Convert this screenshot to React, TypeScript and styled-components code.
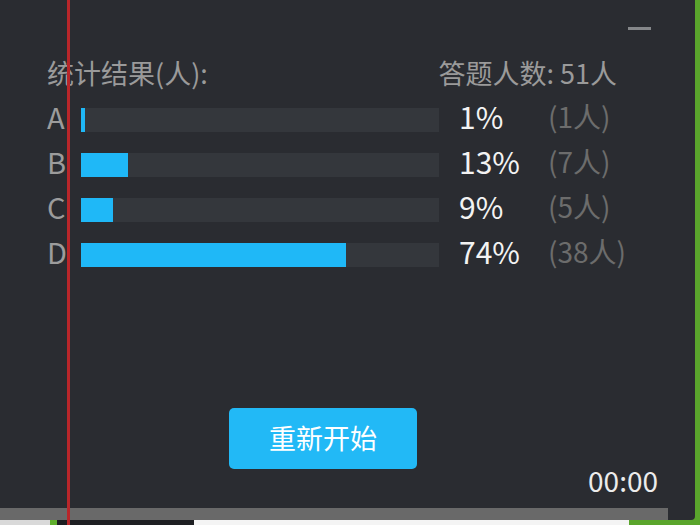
import styled, { createGlobalStyle } from 'styled-components';

interface ResultRow {
  label: string;
  percent: number;
  count: number;
}

const rows: ResultRow[] = [
  { label: 'A', percent: 1, count: 1 },
  { label: 'B', percent: 13, count: 7 },
  { label: 'C', percent: 9, count: 5 },
  { label: 'D', percent: 74, count: 38 },
];

const GlobalStyle = createGlobalStyle`
  html, body {
    margin: 0;
    padding: 0;
    width: 700px;
    height: 525px;
    overflow: hidden;
    background: #2a2c31;
  }
  body {
    font-family: "Noto Sans CJK SC", "Noto Sans", sans-serif;
  }
`;

const Stage = styled.div`
  position: relative;
  width: 700px;
  height: 525px;
  display: flex;
  background: #5aa52c;
`;

const MainColumn = styled.div`
  width: 695px;
  display: flex;
  flex-direction: column;
`;

const Panel = styled.div`
  height: 520px;
  box-sizing: border-box;
  background: #2a2c31;
  border-bottom-right-radius: 4px;
  display: flex;
  flex-direction: column;
`;

const TopBar = styled.div`
  display: flex;
  justify-content: flex-end;
  padding: 27px 44px 0 0;
  height: 30px;
  box-sizing: border-box;
`;

const Minimize = styled.span`
  width: 23px;
  height: 3px;
  background: #85878a;
`;

const Header = styled.div`
  display: flex;
  justify-content: space-between;
  padding: 0 78px 0 47px;
  margin-top: 26px;
  font-size: 27px;
  line-height: 34px;
  color: #9a9a9a;
`;

const Rows = styled.div`
  display: flex;
  flex-direction: column;
  gap: 21px;
  padding-left: 47px;
  margin-top: 18px;
`;

const Row = styled.div`
  display: flex;
  align-items: center;
  height: 24px;
`;

const RowText = styled.span`
  line-height: 24px;
  margin-top: -8px;
`;

const Label = styled(RowText)`
  width: 34px;
  font-size: 29px;
  color: #9c9c9c;
`;

const Track = styled.div`
  width: 358px;
  height: 24px;
  background: #34373c;
`;

const Fill = styled.div`
  height: 100%;
  min-width: 4px;
  background: #1fb8f7;
`;

const Percent = styled(RowText)`
  width: 89px;
  margin-left: 20px;
  font-size: 30px;
  color: #f3f3f3;
`;

const Count = styled(RowText)`
  font-size: 28px;
  color: #6c6c6c;
`;

const Spacer = styled.div`
  flex: 1;
`;

const ButtonRow = styled.div`
  display: flex;
  justify-content: center;
  padding: 0 96px 0 47px;
`;

const RestartButton = styled.button`
  width: 188px;
  height: 61px;
  border: none;
  border-radius: 5px;
  background: #22b9f6;
  color: #ffffff;
  font-family: "Noto Sans CJK SC", sans-serif;
  font-size: 27px;
  cursor: pointer;
  padding: 0 0 3px;
`;

const TimerRow = styled.div`
  display: flex;
  justify-content: flex-end;
  padding-right: 37px;
  font-size: 28px;
  line-height: 30px;
  color: #ececec;
  margin-top: -4px;
`;

const Scrollbar = styled.div`
  width: 668px;
  height: 12px;
  margin-top: 13px;
  background: #696969;
`;

const BottomStrip = styled.div`
  height: 5px;
  display: flex;
`;

const Segment = styled.div<{ $w: number; $c: string }>`
  width: ${({ $w }) => $w}px;
  background: ${({ $c }) => $c};
`;

const RedLine = styled.div`
  position: absolute;
  left: 67px;
  top: 0;
  width: 3px;
  height: 525px;
  background: #b9262a;
`;

export default function App() {
  return (
    <>
      <GlobalStyle />
      <Stage>
        <MainColumn>
          <Panel>
            <TopBar>
              <Minimize />
            </TopBar>
            <Header>
              <span>统计结果(人):</span>
              <span>答题人数: 51人</span>
            </Header>
            <Rows>
              {rows.map((r) => (
                <Row key={r.label}>
                  <Label>{r.label}</Label>
                  <Track>
                    <Fill style={{ width: `${r.percent}%` }} />
                  </Track>
                  <Percent>{r.percent}%</Percent>
                  <Count>({r.count}人)</Count>
                </Row>
              ))}
            </Rows>
            <Spacer />
            <ButtonRow>
              <RestartButton>重新开始</RestartButton>
            </ButtonRow>
            <TimerRow>00:00</TimerRow>
            <Scrollbar />
          </Panel>
          <BottomStrip>
            <Segment $w={50} $c="#d9d9d9" />
            <Segment $w={7} $c="#5fae2c" />
            <Segment $w={137} $c="#1e1f22" />
            <Segment $w={435} $c="#f4f4f4" />
          </BottomStrip>
        </MainColumn>
        <RedLine />
      </Stage>
    </>
  );
}
